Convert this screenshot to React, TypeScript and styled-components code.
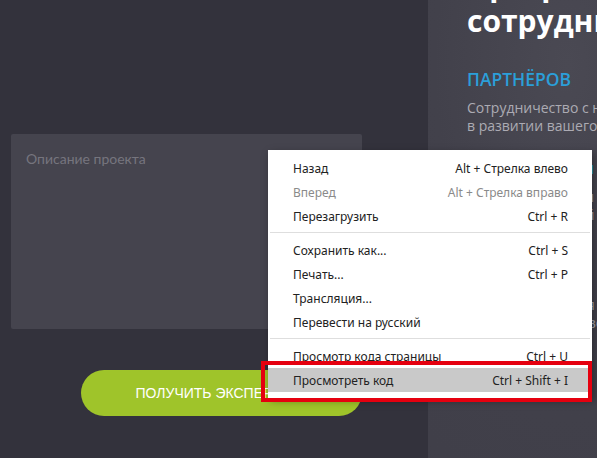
import React from 'react';
import styled, { createGlobalStyle } from 'styled-components';

const GlobalStyle = createGlobalStyle`
  html, body {
    margin: 0;
    padding: 0;
    width: 597px;
    height: 458px;
    overflow: hidden;
    background: #33323c;
  }
`;

type MenuItem =
  | { kind: 'item'; label: string; shortcut?: string; disabled?: boolean; active?: boolean }
  | { kind: 'separator' };

const menuItems: MenuItem[] = [
  { kind: 'item', label: 'Назад', shortcut: 'Alt + Стрелка влево' },
  { kind: 'item', label: 'Вперед', shortcut: 'Alt + Стрелка вправо', disabled: true },
  { kind: 'item', label: 'Перезагрузить', shortcut: 'Ctrl + R' },
  { kind: 'separator' },
  { kind: 'item', label: 'Сохранить как...', shortcut: 'Ctrl + S' },
  { kind: 'item', label: 'Печать...', shortcut: 'Ctrl + P' },
  { kind: 'item', label: 'Трансляция...' },
  { kind: 'item', label: 'Перевести на русский' },
  { kind: 'separator' },
  { kind: 'item', label: 'Просмотр кода страницы', shortcut: 'Ctrl + U' },
  { kind: 'item', label: 'Просмотреть код', shortcut: 'Ctrl + Shift + I', active: true }
];

export default function App() {
  return (
    <>
      <GlobalStyle />
      <Page>
        <FormColumn>
          <Description placeholder="Описание проекта" />
          <SubmitButton>Получить экспертизу</SubmitButton>
        </FormColumn>

        <InfoPanel>
          <Heading>
            Программа
            <br />
            сотрудничества
          </Heading>
          <Accent>Партнёров</Accent>
          <Text>
            Сотрудничество с нами — это новый шаг
            <br />
            в развитии вашего бизнеса
          </Text>
          <SubAccent>Для агентств и студий</SubAccent>
          <Text>
            Получайте бонусы за каждого клиента
            <br />
            и развивайте свой бизнес вместе с нами
          </Text>
          <Text $gap={72}>
            Открытые условия и прозрачная отчётность.
            <br />
            Работаем по договору с каждым партнёром
          </Text>
        </InfoPanel>

        <ContextMenu>
          {menuItems.map((item, i) =>
            item.kind === 'separator' ? (
              <Separator key={i} />
            ) : (
              <MenuRow key={i} $disabled={item.disabled} $active={item.active}>
                <span>{item.label}</span>
                {item.shortcut && <span>{item.shortcut}</span>}
              </MenuRow>
            )
          )}
        </ContextMenu>

        <Highlight />
      </Page>
    </>
  );
}

const Page = styled.div`
  position: relative;
  display: grid;
  grid-template-columns: 428px 1fr;
  width: 597px;
  height: 458px;
  overflow: hidden;
  background: #33323c;
`;

const FormColumn = styled.div`
  display: flex;
  flex-direction: column;
  padding: 134px 0 0 11px;
`;

const Description = styled.textarea`
  box-sizing: border-box;
  width: 351px;
  height: 195px;
  margin: 0;
  padding: 16px 15px;
  border: none;
  border-radius: 2px;
  background: #45444e;
  resize: none;
  outline: none;
  font-family: Lato, 'Open Sans', sans-serif;
  font-size: 14px;
  color: #d0d0d6;

  &::placeholder {
    color: #76757e;
  }
`;

const SubmitButton = styled.button`
  width: 281px;
  height: 46px;
  margin: 41px 0 0 70px;
  border: none;
  border-radius: 23px;
  background: #9fc42a;
  color: #ffffff;
  font-family: 'Liberation Sans', Arial, sans-serif;
  font-size: 14px;
  text-transform: uppercase;
  cursor: pointer;
`;

const InfoPanel = styled.section`
  display: flex;
  flex-direction: column;
  margin-top: -33px;
  padding: 0 0 0 39px;
  white-space: nowrap;
  background: radial-gradient(ellipse at 40% 20%, #4a4953 0%, #42414b 45%, #3f3e48 100%);
  font-family: 'Open Sans', sans-serif;
`;

const Heading = styled.h2`
  margin: 0;
  font-size: 30px;
  line-height: 36px;
  font-weight: 700;
  color: #ffffff;
`;

const Accent = styled.h3`
  margin: 28px 0 0;
  font-size: 17.5px;
  line-height: 24px;
  font-weight: 600;
  text-transform: uppercase;
  color: #2b9fd9;
`;

const SubAccent = styled(Accent)`
  margin-top: 21px;
  font-size: 17px;
  text-transform: none;
`;

const Text = styled.p<{ $gap?: number }>`
  margin: ${p => p.$gap ?? 8}px 0 0;
  font-size: 14px;
  line-height: 18px;
  color: #acabb3;
`;

const ContextMenu = styled.div`
  position: absolute;
  left: 268px;
  top: 150px;
  width: 324px;
  box-sizing: border-box;
  padding: 6px 0;
  background: #ffffff;
  box-shadow: 2px 3px 8px rgba(0, 0, 0, 0.35);
  font-family: 'Noto Sans', 'Open Sans', sans-serif;
  font-size: 12px;
`;

const MenuRow = styled.div<{ $disabled?: boolean; $active?: boolean }>`
  display: flex;
  justify-content: space-between;
  align-items: center;
  height: 24px;
  padding: 0 24px 0 25px;
  color: ${p => (p.$disabled ? '#8a8a8a' : '#222222')};
  background: ${p => (p.$active ? '#c9c9c9' : 'transparent')};
`;

const Separator = styled.div`
  height: 1px;
  margin: 4px 2px 5px;
  background: #dedede;
`;

const Highlight = styled.div`
  position: absolute;
  left: 261px;
  top: 361px;
  width: 331px;
  height: 41px;
  box-sizing: border-box;
  border: 4px solid #e5000f;
  pointer-events: none;
`;
